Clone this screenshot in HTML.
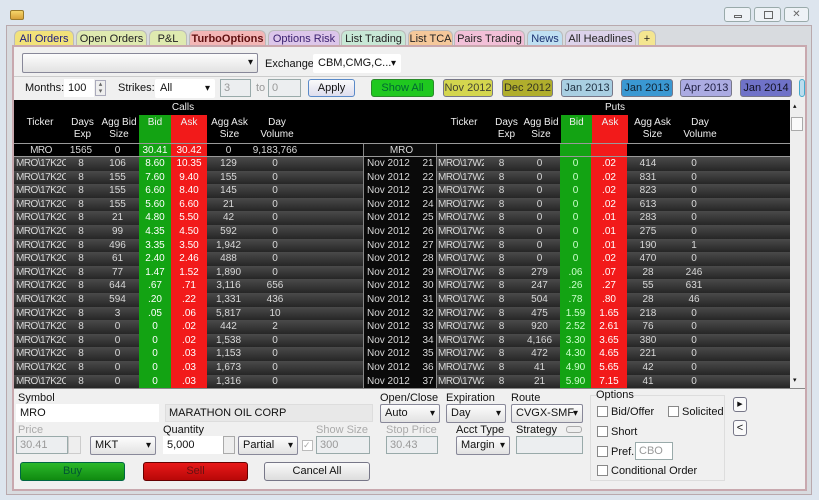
<!DOCTYPE html>
<html><head><meta charset="utf-8">
<style>
*{box-sizing:border-box;margin:0;padding:0}
body{width:819px;height:500px;overflow:hidden;background:#dde5ee;font-family:"Liberation Sans",sans-serif;font-size:11px;color:#111;position:relative}
.a{position:absolute}
.tab{position:absolute;top:30px;height:16px;border-radius:6px 6px 0 0;font-size:11px;line-height:16px;text-align:center;color:#222;border:1px solid #bbb;border-bottom:none}
.inp{position:absolute;background:#fff;border:1px solid #9aa;height:18px;line-height:16px;padding-left:3px;font-size:11px}
.dis{background:#eceef0;color:#999}
.sel{position:absolute;background:linear-gradient(#fdfdfd,#e2e2e2);border:1px solid #889;height:19px;line-height:17px;padding-left:4px;font-size:11px;border-radius:2px}
.sel:after{content:"▾";position:absolute;right:4px;top:0;font-size:10px}
.btn{position:absolute;border:1px solid #778;border-radius:3px;text-align:center;font-size:11px;line-height:16px;height:18px}
.lbl{position:absolute;font-size:11px}
.row{position:absolute;left:14px;width:776px;height:13.6px;display:flex;font-size:10px;line-height:13px;color:#d8d8d8;background:linear-gradient(#4a4a4a,#262626)}
.row span{display:block;text-align:center;overflow:hidden;white-space:nowrap}
.c1{width:52px;text-align:left!important;padding-left:2px;letter-spacing:-0.5px}.c2{width:30px}.c3{width:43px}.c4{width:32px;background:#13a313;color:#fff}.c5{width:36px;background:#f21a1a;color:#fff}.c6{width:43px}.c7{width:50px}.c8{width:63px}
.c9{width:57px;background:#0a0a0a;border-left:1px solid #888;text-align:left!important;padding-left:3px}.c10{width:17px;background:#0a0a0a;border-right:1px solid #888}
.d1{width:47px;text-align:left!important;padding-left:1px;letter-spacing:-0.5px}.d2{width:35px}.d3{width:41px}.d4{width:31px;background:#13a313;color:#cfc}.d5{width:36px;background:#f21a1a;color:#fff}.d6{width:42px}.d7{width:50px}
.hd{position:absolute;color:#eee;font-size:10px;text-align:center;line-height:12px}
.cb{position:absolute;width:11px;height:11px;border:1px solid #888;background:#fff}
</style></head><body>
<div class="a" style="left:10px;top:10px;width:14px;height:10px;background:linear-gradient(#f5d56a,#d8a23a);border:1px solid #9a7a2a;border-radius:2px"></div>
<div class="a" style="left:724px;top:7px;width:27px;height:15px;border:1px solid #9aa;border-radius:3px;background:#eef2f6"><div class="a" style="left:9px;top:7px;width:8px;height:3px;border:1px solid #666"></div></div>
<div class="a" style="left:754px;top:7px;width:27px;height:15px;border:1px solid #9aa;border-radius:3px;background:#eef2f6"><div class="a" style="left:9px;top:3px;width:9px;height:8px;border:1px solid #666"></div></div>
<div class="a" style="left:784px;top:7px;width:25px;height:15px;border:1px solid #9aa;border-radius:3px;background:#eef2f6;font-size:10px;text-align:center;line-height:13px;color:#666">✕</div>
<div class="a" style="left:6px;top:25px;width:806px;height:470px;background:#d8dbdf;border:1px solid #b9a9ad"></div>
<div class="tab" style="left:14px;width:60px;background:#f2e27a;color:#1a1a80">All Orders</div>
<div class="tab" style="left:76px;width:71px;background:#dfeab0">Open Orders</div>
<div class="tab" style="left:149px;width:38px;background:#dfeab0">P&amp;L</div>
<div class="tab" style="left:189px;width:77px;background:#f3b6b6;font-weight:bold;color:#601010">TurboOptions</div>
<div class="tab" style="left:268px;width:72px;background:#dcc6ea;color:#3a2070">Options Risk</div>
<div class="tab" style="left:341px;width:65px;background:#c8e8d6">List Trading</div>
<div class="tab" style="left:408px;width:45px;background:#f5c89a">List TCA</div>
<div class="tab" style="left:454px;width:71px;background:#f2c0d8">Pairs Trading</div>
<div class="tab" style="left:527px;width:36px;background:#bfe0f2;color:#1a3070">News</div>
<div class="tab" style="left:565px;width:71px;background:#dcd2ea">All Headlines</div>
<div class="tab" style="left:638px;width:18px;background:#f4e690">+</div>
<div class="a" style="left:12px;top:45px;width:795px;height:446px;background:#f0f0f0;border:2px solid #c8a8ae"></div>
<div class="sel" style="left:22px;top:53px;width:236px;height:20px"></div>
<div class="lbl" style="left:265px;top:58px">Exchange:</div>
<div class="sel" style="left:313px;top:54px;width:88px;background:#fff;border-color:#fff">CBM,CMG,C...</div>
<div class="a" style="left:14px;top:76px;width:790px;height:1px;background:#ccc"></div>
<div class="lbl" style="left:25px;top:82px">Months:</div>
<div class="inp" style="left:64px;top:79px;width:30px;border-color:#fff">100</div>
<div class="a" style="left:95px;top:80px;width:11px;height:16px;border:1px solid #aab;background:#eee;font-size:7px;line-height:7px;text-align:center;color:#666">▴<br>▾</div>
<div class="lbl" style="left:118px;top:82px">Strikes:</div>
<div class="sel" style="left:155px;top:79px;width:60px;background:#fff;border-color:#fff">All</div>
<div class="inp dis" style="left:220px;top:79px;width:31px">3</div>
<div class="lbl" style="left:256px;top:82px;color:#999">to</div>
<div class="inp dis" style="left:268px;top:79px;width:33px">0</div>
<div class="btn" style="left:308px;top:79px;width:47px;background:linear-gradient(#fafafa,#dde);border-color:#5a8ac8">Apply</div>
<div class="btn" style="left:371px;top:79px;width:63px;background:#1fc81f;color:#063;border-color:#2a8a2a">Show All</div>
<div class="btn" style="left:443px;top:79px;width:50px;background:#d4d64e;color:#443">Nov 2012</div>
<div class="btn" style="left:502px;top:79px;width:51px;background:#b0ae2c;color:#332">Dec 2012</div>
<div class="btn" style="left:561px;top:79px;width:52px;background:#a9cfe2;color:#234">Jan 2013</div>
<div class="btn" style="left:621px;top:79px;width:52px;background:#3a98d2;color:#123">Jan 2013</div>
<div class="btn" style="left:680px;top:79px;width:52px;background:#ababe2;color:#224">Apr 2013</div>
<div class="btn" style="left:740px;top:79px;width:52px;background:#6f72c8;color:#112">Jan 2014</div>
<div class="btn" style="left:799px;top:79px;width:6px;background:#bde;border-color:#4ac"></div>
<div class="a" style="left:14px;top:100px;width:776px;height:288px;background:#000"></div>
<div class="a" style="left:790px;top:100px;width:15px;height:288px;background:#eee"><div class="a" style="left:1px;top:17px;width:12px;height:14px;border:1px solid #aaa;background:#fafafa"></div><div class="a" style="left:3px;top:2px;font-size:7px">▴</div><div class="a" style="left:3px;top:276px;font-size:7px">▾</div></div>
<div class="a" style="left:139px;top:115px;width:32px;height:28px;background:#13a313"></div>
<div class="a" style="left:171px;top:115px;width:36px;height:28px;background:#f21a1a"></div>
<div class="a" style="left:561px;top:115px;width:31px;height:28px;background:#13a313"></div>
<div class="a" style="left:592px;top:115px;width:36px;height:28px;background:#f21a1a"></div>
<div class="hd" style="left:163px;top:102px;width:40px">Calls</div>
<div class="hd" style="left:595px;top:102px;width:40px">Puts</div>
<div class="hd" style="left:14px;top:117px;width:52px">Ticker</div>
<div class="hd" style="left:66px;top:117px;width:33px">Days<br>Exp</div>
<div class="hd" style="left:99px;top:117px;width:40px">Agg Bid<br>Size</div>
<div class="hd" style="left:139px;top:117px;width:32px">Bid</div>
<div class="hd" style="left:171px;top:117px;width:36px">Ask</div>
<div class="hd" style="left:207px;top:117px;width:45px">Agg Ask<br>Size</div>
<div class="hd" style="left:252px;top:117px;width:50px">Day<br>Volume</div>
<div class="hd" style="left:438px;top:117px;width:52px">Ticker</div>
<div class="hd" style="left:490px;top:117px;width:33px">Days<br>Exp</div>
<div class="hd" style="left:521px;top:117px;width:40px">Agg Bid<br>Size</div>
<div class="hd" style="left:561px;top:117px;width:31px">Bid</div>
<div class="hd" style="left:592px;top:117px;width:36px">Ask</div>
<div class="hd" style="left:630px;top:117px;width:45px">Agg Ask<br>Size</div>
<div class="hd" style="left:675px;top:117px;width:50px">Day<br>Volume</div>
<div class="row" style="top:143px;background:#000;border-top:1px solid #999;border-bottom:1px solid #999;height:14px"><span class="c1" style="text-align:center!important">MRO</span><span class="c2">1565</span><span class="c3">0</span><span class="c4">30.41</span><span class="c5">30.42</span><span class="c6">0</span><span class="c7">9,183,766</span><span class="c8"></span><span class="c9" style="width:74px;border-right:1px solid #888;text-align:center!important">MRO</span><span class="d1"></span><span class="d2"></span><span class="d3"></span><span class="d4"></span><span class="d5"></span></div>
<div id="rows"></div>
<div class="lbl" style="left:18px;top:392px">Symbol</div>
<div class="inp" style="left:16px;top:404px;width:143px;border-color:#fff">MRO</div>
<div class="inp" style="left:165px;top:404px;width:208px;background:#e8e8e8;border-color:#ddd">MARATHON OIL CORP</div>
<div class="lbl" style="left:380px;top:392px">Open/Close</div>
<div class="lbl" style="left:446px;top:392px">Expiration</div>
<div class="lbl" style="left:511px;top:392px">Route</div>
<div class="sel" style="left:380px;top:404px;width:60px">Auto</div>
<div class="sel" style="left:446px;top:404px;width:60px">Day</div>
<div class="sel" style="left:511px;top:404px;width:72px">CVGX-SMF</div>
<div class="lbl" style="left:18px;top:424px;color:#aaa">Price</div>
<div class="inp dis" style="left:16px;top:436px;width:52px">30.41</div>
<div class="a" style="left:68px;top:436px;width:13px;height:18px;border:1px solid #ccc;background:#eee"></div>
<div class="sel" style="left:90px;top:436px;width:66px">MKT</div>
<div class="lbl" style="left:163px;top:424px">Quantity</div>
<div class="inp" style="left:163px;top:436px;width:60px;border-color:#fff">5,000</div>
<div class="a" style="left:223px;top:436px;width:12px;height:18px;border:1px solid #aaa;background:#eee"></div>
<div class="sel" style="left:238px;top:436px;width:60px">Partial</div>
<div class="cb" style="left:302px;top:440px;border-color:#bbb;color:#aaa;font-size:9px;line-height:9px">✓</div>
<div class="lbl" style="left:316px;top:424px;color:#aaa">Show Size</div>
<div class="inp dis" style="left:316px;top:436px;width:54px">300</div>
<div class="lbl" style="left:386px;top:424px;color:#aaa">Stop Price</div>
<div class="inp dis" style="left:386px;top:436px;width:52px">30.43</div>
<div class="lbl" style="left:456px;top:424px">Acct Type</div>
<div class="sel" style="left:456px;top:436px;width:54px">Margin</div>
<div class="lbl" style="left:516px;top:424px">Strategy</div>
<div class="a" style="left:566px;top:426px;width:16px;height:7px;border:1px solid #aaa;border-radius:3px;background:#eee"></div>
<div class="inp dis" style="left:516px;top:436px;width:67px"></div>
<div class="btn" style="left:20px;top:462px;width:105px;height:19px;background:linear-gradient(#2bb82b,#108a10);border-color:#064;color:#053">Buy</div>
<div class="btn" style="left:143px;top:462px;width:105px;height:19px;background:linear-gradient(#e81818,#b80808);border-color:#600;color:#611">Sell</div>
<div class="btn" style="left:264px;top:462px;width:106px;height:19px;background:linear-gradient(#fafafa,#ddd)">Cancel All</div>
<div class="a" style="left:590px;top:395px;width:135px;height:86px;border:1px solid #ddd"></div>
<div class="lbl" style="left:596px;top:389px;background:#f0f0f0">Options</div>
<div class="cb" style="left:597px;top:406px"></div><div class="lbl" style="left:611px;top:406px">Bid/Offer</div>
<div class="cb" style="left:668px;top:406px"></div><div class="lbl" style="left:682px;top:406px">Solicited</div>
<div class="cb" style="left:597px;top:426px"></div><div class="lbl" style="left:611px;top:426px">Short</div>
<div class="cb" style="left:597px;top:446px"></div><div class="lbl" style="left:611px;top:446px">Pref.</div>
<div class="inp dis" style="left:635px;top:442px;width:38px;background:#fff">CBO</div>
<div class="cb" style="left:597px;top:465px"></div><div class="lbl" style="left:611px;top:465px">Conditional Order</div>
<div class="btn" style="left:733px;top:397px;width:14px;height:15px;background:#fafafa;font-size:7px;line-height:13px">▶</div>
<div class="btn" style="left:733px;top:420px;width:14px;height:16px;background:#fafafa;line-height:14px">&lt;</div>
<script>
var d=[[21,8,106,"8.60","10.35",129,0,8,0,0,".02",414,0],[22,8,155,"7.60","9.40",155,0,8,0,0,".02",831,0],[23,8,155,"6.60","8.40",145,0,8,0,0,".02",823,0],[24,8,155,"5.60","6.60",21,0,8,0,0,".02",613,0],[25,8,21,"4.80","5.50",42,0,8,0,0,".01",283,0],[26,8,99,"4.35","4.50",592,0,8,0,0,".01",275,0],[27,8,496,"3.35","3.50","1,942",0,8,0,0,".01",190,1],[28,8,61,"2.40","2.46",488,0,8,0,0,".02",470,0],[29,8,77,"1.47","1.52","1,890",0,8,279,".06",".07",28,246],[30,8,644,".67",".71","3,116",656,8,247,".26",".27",55,631],[31,8,594,".20",".22","1,331",436,8,504,".78",".80",28,46],[32,8,3,".05",".06","5,817",10,8,475,"1.59","1.65",218,0],[33,8,0,0,".02",442,2,8,920,"2.52","2.61",76,0],[34,8,0,0,".02","1,538",0,8,"4,166","3.30","3.65",380,0],[35,8,0,0,".03","1,153",0,8,472,"4.30","4.65",221,0],[36,8,0,0,".03","1,673",0,8,41,"4.90","5.65",42,0],[37,8,0,0,".03","1,316",0,8,21,"5.90","7.15",41,0]];
var h="";d.forEach(function(r,i){h+='<div class="row" style="top:'+(157+i*13.6)+'px"><span class="c1">MRO\\17K2C</span><span class="c2">'+r[1]+'</span><span class="c3">'+r[2]+'</span><span class="c4">'+r[3]+'</span><span class="c5">'+r[4]+'</span><span class="c6">'+r[5]+'</span><span class="c7">'+r[6]+'</span><span class="c8"></span><span class="c9">Nov 2012</span><span class="c10">'+r[0]+'</span><span class="d1">MRO\\17W2C</span><span class="d2">'+r[7]+'</span><span class="d3">'+r[8]+'</span><span class="d4">'+r[9]+'</span><span class="d5">'+r[10]+'</span><span class="d6">'+r[11]+'</span><span class="d7">'+r[12]+'</span></div>';});
document.getElementById("rows").innerHTML=h;
</script>
<div class="a" style="left:14px;top:388px;width:791px;height:1px;background:#888"></div>
</body></html>
